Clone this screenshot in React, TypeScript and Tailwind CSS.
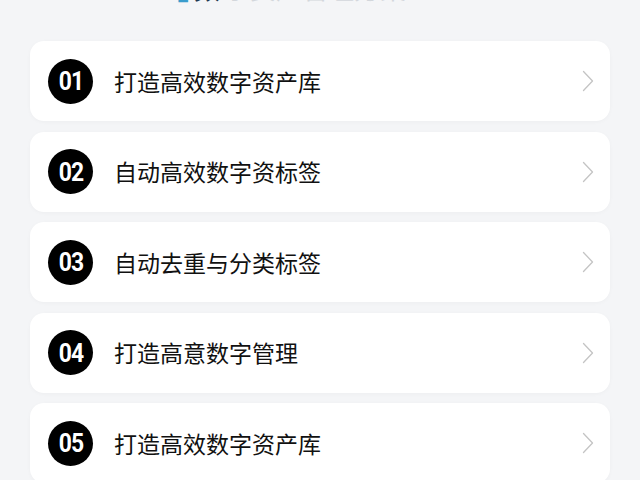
const items = [
    { no: '01', title: '打造高效数字资产库' },
    { no: '02', title: '自动高效数字资标签' },
    { no: '03', title: '自动去重与分类标签' },
    { no: '04', title: '打造高意数字管理' },
    { no: '05', title: '打造高效数字资产库' },
];

function Chevron() {
    return (
        <svg width="12" height="22" viewBox="0 0 12 22" fill="none" className="text-[#c4c4c4]">
            <path d="M1.5 1.5 L10.5 11 L1.5 20.5" stroke="currentColor" strokeWidth="1.3" strokeLinecap="round" strokeLinejoin="round" />
        </svg>
    );
}

export default function App() {
    return (
        <div
            className="w-[640px] h-[480px] overflow-hidden bg-[#f4f5f7]"
            style={{ fontFamily: '"Noto Sans CJK SC", "Noto Sans", sans-serif' }}
        >
            {/* title is scrolled mostly out of view */}
            <div className="h-[41px] overflow-hidden">
                <div className="flex items-center gap-1 pl-[176px] -mt-[25px] text-[26px] leading-[26px] text-[#d3d7dc]">
                    <span className="text-[#3a9ccc]">▮</span>
                    <span className="text-[#1f3a52] font-bold">数</span>
                    <span>字资产管理方案</span>
                </div>
            </div>
            <div className="flex flex-col gap-[10.5px] px-[30px]">
                {items.map((item) => (
                    <div
                        key={item.no}
                        className="flex items-center h-[80px] bg-white rounded-[14px] shadow-[0_1px_4px_rgba(0,0,0,0.03)] pl-[18px] pr-[16px]"
                    >
                        <div
                            className="w-[45px] h-[45px] rounded-full bg-black text-white flex items-center justify-center"
                            style={{ fontFamily: '"Roboto", sans-serif' }}
                        >
                            <span className="text-[26px] leading-none font-bold tracking-[-1px] scale-x-[0.88] inline-block">
                                {item.no}
                            </span>
                        </div>
                        <div className="ml-[21px] flex-1 text-[23px] text-[#111]">{item.title}</div>
                        <Chevron />
                    </div>
                ))}
            </div>
        </div>
    );
}
